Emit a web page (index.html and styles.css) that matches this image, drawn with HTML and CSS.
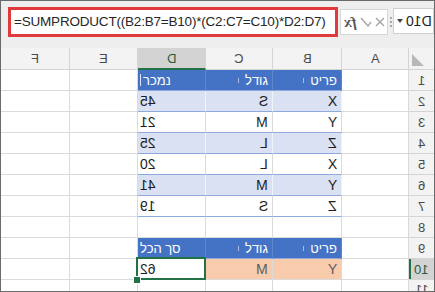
FILE: index.html
```html
<!DOCTYPE html>
<html>
<head>
    <meta charset="utf-8">
    <title>SUMPRODUCT</title>
    <link rel="stylesheet" href="styles.css">
</head>
<body>
    <div class="frame">
        <div class="fbar">
            <div class="formula">=SUMPRODUCT((B2:B7=B10)*(C2:C7=C10)*D2:D7)</div>
            <div class="tools">
                <span class="fx m">fx</span>
                <svg width="12" height="10" viewBox="0 0 12 10" fill="none" stroke="#a6a6a6" stroke-width="1.4">
                    <polyline points="11,5 8,9 1,1"></polyline>
                </svg>
                <svg width="10" height="10" viewBox="0 0 10 10" fill="none" stroke="#a6a6a6" stroke-width="1.4">
                    <line x1="1" y1="1" x2="9" y2="9"></line>
                    <line x1="9" y1="1" x2="1" y2="9"></line>
                </svg>
            </div>
            <div class="grip"><i></i><i></i><i></i></div>
            <div class="namebox"><span class="caret"></span><span class="m">D10</span></div>
        </div>

        <div class="sheet">
            <!-- column headers -->
            <div class="c hd"><span class="m">F</span></div>
            <div class="c hd"><span class="m">E</span></div>
            <div class="c hd sel"><span class="m">D</span></div>
            <div class="c hd"><span class="m">C</span></div>
            <div class="c hd"><span class="m">B</span></div>
            <div class="c hd"><span class="m">A</span></div>
            <div class="c corner">
                <svg width="12" height="12" viewBox="0 0 12 12"><polygon points="0,0 0,12 12,12" fill="#b8b8b8"></polygon></svg>
            </div>

            <!-- 1 -->
            <div class="c"></div>
            <div class="c"></div>
            <div class="c th l"><span class="caretline"></span>נמכר</div>
            <div class="c th r"><span class="fl"></span>גודל</div>
            <div class="c th r"><span class="fl"></span>פריט</div>
            <div class="c"></div>
            <div class="c rh"><span class="m">1</span></div>

            <!-- 2 -->
            <div class="c"></div>
            <div class="c"></div>
            <div class="c band l"><span class="m">45</span></div>
            <div class="c band r"><span class="m">S</span></div>
            <div class="c band r"><span class="m">X</span></div>
            <div class="c"></div>
            <div class="c rh"><span class="m">2</span></div>

            <!-- 3 -->
            <div class="c"></div>
            <div class="c"></div>
            <div class="c plain l"><span class="m">21</span></div>
            <div class="c plain r"><span class="m">M</span></div>
            <div class="c plain r"><span class="m">Y</span></div>
            <div class="c"></div>
            <div class="c rh"><span class="m">3</span></div>

            <!-- 4 -->
            <div class="c"></div>
            <div class="c"></div>
            <div class="c band l"><span class="m">25</span></div>
            <div class="c band r"><span class="m">L</span></div>
            <div class="c band r"><span class="m">Z</span></div>
            <div class="c"></div>
            <div class="c rh"><span class="m">4</span></div>

            <!-- 5 -->
            <div class="c"></div>
            <div class="c"></div>
            <div class="c plain l"><span class="m">20</span></div>
            <div class="c plain r"><span class="m">L</span></div>
            <div class="c plain r"><span class="m">X</span></div>
            <div class="c"></div>
            <div class="c rh"><span class="m">5</span></div>

            <!-- 6 -->
            <div class="c"></div>
            <div class="c"></div>
            <div class="c band l"><span class="m">41</span></div>
            <div class="c band r"><span class="m">M</span></div>
            <div class="c band r"><span class="m">Y</span></div>
            <div class="c"></div>
            <div class="c rh"><span class="m">6</span></div>

            <!-- 7 -->
            <div class="c"></div>
            <div class="c"></div>
            <div class="c plain l"><span class="m">19</span></div>
            <div class="c plain r"><span class="m">S</span></div>
            <div class="c plain r"><span class="m">Z</span></div>
            <div class="c"></div>
            <div class="c rh"><span class="m">7</span></div>

            <!-- 8 -->
            <div class="c"></div>
            <div class="c"></div>
            <div class="c"></div>
            <div class="c"></div>
            <div class="c"></div>
            <div class="c"></div>
            <div class="c rh"><span class="m">8</span></div>

            <!-- 9 -->
            <div class="c"></div>
            <div class="c"></div>
            <div class="c th l">סך הכל</div>
            <div class="c th r"><span class="fl"></span>גודל</div>
            <div class="c th r"><span class="fl"></span>פריט</div>
            <div class="c"></div>
            <div class="c rh"><span class="m">9</span></div>

            <!-- 10 -->
            <div class="c"></div>
            <div class="c"></div>
            <div class="c l cur"><span class="m">62</span></div>
            <div class="c org r"><span class="m">M</span></div>
            <div class="c org r"><span class="m">Y</span></div>
            <div class="c"></div>
            <div class="c rh sel"><span class="m">10</span></div>

            <!-- 11 -->
            <div class="c"></div>
            <div class="c"></div>
            <div class="c"></div>
            <div class="c"></div>
            <div class="c"></div>
            <div class="c"></div>
            <div class="c rh last"><span class="m">11</span></div>
        </div>
    </div>
</body>
</html>
```

FILE: styles.css
```css
:root {
    --grid: #dadada;
    --head: #f3f3f3;
    --head-sel: #d3d3d3;
    --green: #217346;
    --blue: #4472c4;
    --band: #d9e1f2;
    --band-line: #8ea9db;
    --orange: #f8cbad;
}

* {
    margin: 0;
    padding: 0;
    box-sizing: border-box;
}

body {
    font-family: 'Liberation Sans', Arial, sans-serif;
    background: #fff;
}

.frame {
    width: 435px;
    height: 292px;
    border: 1px solid #6a6a6a;
    overflow: hidden;
    background: #fff;
}

.m {
    display: inline-block;
    transform: scaleX(-1);
}

/* formula bar */
.fbar {
    height: 47px;
    display: flex;
    align-items: flex-start;
    padding: 6px 0 0 7px;
    background: #eeeeee;
}

.formula {
    width: 330px;
    height: 30px;
    border: 3px solid #e03a3c;
    background: #fff;
    font-size: 13.5px;
    letter-spacing: -0.2px;
    line-height: 24px;
    color: #262626;
    padding-left: 3px;
    white-space: nowrap;
    overflow: hidden;
}

.tools {
    margin: 2px 0 0 2px;
    width: 48px;
    height: 26px;
    border: 1px solid #d6d6d6;
    background: #fff;
    display: flex;
    align-items: center;
    gap: 3px;
    padding-left: 3px;
}

.fx {
    font-family: 'Liberation Serif', serif;
    font-style: italic;
    font-weight: bold;
    font-size: 15px;
    color: #555;
}

.grip {
    width: 5px;
    height: 26px;
    margin-top: 2px;
    display: flex;
    flex-direction: column;
    align-items: center;
    justify-content: center;
    gap: 2px;
}

.grip i {
    width: 2px;
    height: 2px;
    background: #a8a8a8;
}

.namebox {
    width: 41px;
    height: 26px;
    margin-top: 1px;
    border: 1px solid #cfcfcf;
    background: #fff;
    display: flex;
    align-items: center;
    gap: 3px;
    padding-left: 3px;
    font-size: 14px;
    color: #222;
}

.caret {
    width: 0;
    height: 0;
    border-left: 3px solid transparent;
    border-right: 3px solid transparent;
    border-top: 4px solid #444;
}

/* sheet */
.sheet {
    display: grid;
    grid-template-columns: 69px 68px 68px 67px 69px 67px 25px;
    grid-template-rows: 22px;
    grid-auto-rows: 21px;
}

.c {
    border-right: 1px solid var(--grid);
    border-bottom: 1px solid var(--grid);
    display: flex;
    align-items: center;
    padding: 0 4px;
    font-size: 14px;
    color: #1e1e1e;
    white-space: nowrap;
    overflow: hidden;
}

.r {
    justify-content: flex-end;
}

.l {
    justify-content: flex-start;
    padding-left: 2px;
}

.hd {
    background: var(--head);
    justify-content: center;
    color: #4a4a4a;
    font-size: 13px;
    border-color: #d4d4d4;
}

.hd.sel {
    background: var(--head-sel);
    border-bottom: 2px solid var(--green);
    color: #2a5a3c;
}

.corner {
    background: var(--head);
    border-right: none;
    border-color: #d4d4d4;
    align-items: flex-end;
    padding: 0 0 3px 3px;
}

.rh {
    background: var(--head);
    justify-content: center;
    border-right: none;
    border-color: #d4d4d4;
    color: #4a4a4a;
    font-size: 13px;
    padding: 0;
}

.rh.last {
    align-items: flex-start;
    padding-top: 2px;
}

.rh.sel {
    background: var(--head-sel);
    color: #2a5a3c;
    box-shadow: inset 2px 0 var(--green);
}

.th {
    background: var(--blue);
    color: #fff;
    font-size: 13px;
    border-right-color: #5e86cd;
    border-bottom-color: var(--band-line);
}

.band {
    background: var(--band);
    border-bottom-color: var(--band-line);
    border-right-color: #eef2fa;
}

.plain {
    border-bottom-color: var(--band-line);
}

.org {
    background: var(--orange);
    color: #5c5c5c;
}

.fl {
    width: 1px;
    height: 5px;
    background: #a9bde3;
    margin-right: 6px;
}

.caretline {
    width: 1px;
    height: 12px;
    background: #dfe7f6;
    margin-right: 2px;
}

/* active cell */
.cur {
    position: relative;
    overflow: visible;
}

.cur::before {
    content: "";
    position: absolute;
    left: -2px;
    top: -2px;
    right: -1px;
    bottom: -1px;
    border: 2px solid var(--green);
}

.cur::after {
    content: "";
    position: absolute;
    left: -5px;
    bottom: -5px;
    width: 6px;
    height: 6px;
    background: var(--green);
    border: 1px solid #fff;
}
```
